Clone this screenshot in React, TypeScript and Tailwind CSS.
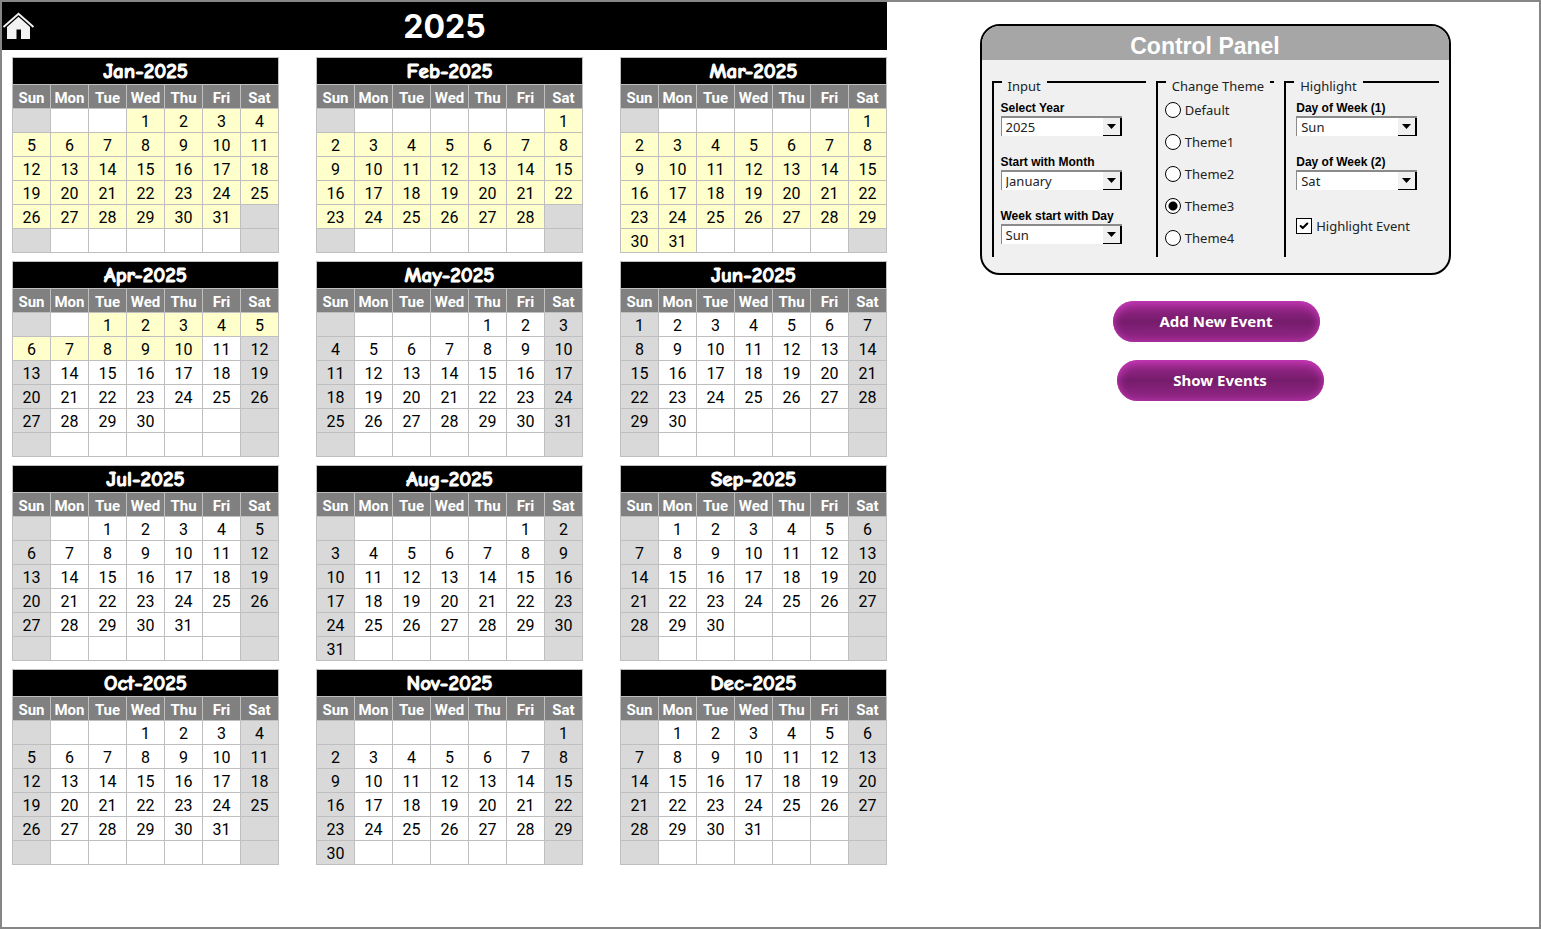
import { useState } from 'react'
import type { ReactNode } from 'react'
import { Check } from 'lucide-react'
import clsx from 'clsx'

const MONTHS = ['January', 'February', 'March', 'April', 'May', 'June', 'July', 'August', 'September', 'October', 'November', 'December']
const DAYS = ['Sun', 'Mon', 'Tue', 'Wed', 'Thu', 'Fri', 'Sat']
const YEARS = ['2023', '2024', '2025', '2026', '2027']
const THEMES = ['Default', 'Theme1', 'Theme2', 'Theme3', 'Theme4']

// Event runs from Jan 1 to Apr 10
const EVENT_START = new Date(2025, 0, 1)
const EVENT_END = new Date(2025, 3, 10)

function HomeIcon() {
  return (
    <svg width="33" height="28" viewBox="0 0 33 28" aria-hidden="true">
      <path d="M1.5 15 L16.500 1.800 L31.500 15" fill="none" stroke="#f2f2f2" strokeWidth="2" />
      <path d="M16.500 4.800 L28 15 V27 H19 V17.500 H14.500 V27 H5 V15 Z" fill="#f2f2f2" />
    </svg>
  )
}

type MonthProps = {
  year: number
  month: number
  weekStart: number
  marked: string[]
  showEvent: boolean
}

function Month({ year, month, weekStart, marked, showEvent }: MonthProps) {
  const offset = (new Date(year, month, 1).getDay() - weekStart + 7) % 7
  const count = new Date(year, month + 1, 0).getDate()
  const days = DAYS.map((_, i) => DAYS[(i + weekStart) % 7])

  return (
    <table className="w-[267px] table-fixed border-collapse text-center">
      <thead>
        <tr>
          <th colSpan={7} className="h-[27px] border border-[#bfbfbf] bg-black p-0 font-['Comic_Sans_MS','Comic_Neue','Lato',sans-serif] text-[21px] leading-5 font-bold text-white [-webkit-text-stroke:1px_#fff]">
            {MONTHS[month].slice(0, 3)}-{year}
          </th>
        </tr>
        <tr>
          {days.map((day) => (
            <th key={day} className="h-6 border border-[#bfbfbf] bg-[#808080] p-0 pt-0.5 text-[15px] leading-5 font-bold text-white">
              {day}
            </th>
          ))}
        </tr>
      </thead>
      <tbody>
        {[0, 1, 2, 3, 4, 5].map((week) => (
          <tr key={week}>
            {days.map((day, i) => {
              const n = week * 7 + i - offset + 1
              const inMonth = n >= 1 && n <= count
              const date = new Date(year, month, n)
              const isEvent = showEvent && inMonth && date >= EVENT_START && date <= EVENT_END
              return (
                <td
                  key={day}
                  className={clsx(
                    'h-6 border border-[#bfbfbf] p-0 pt-0.5 text-base leading-5 text-black',
                    isEvent ? 'bg-[#ffffcc]' : marked.includes(day) ? 'bg-[#d9d9d9]' : 'bg-white'
                  )}
                >
                  {inMonth ? n : ''}
                </td>
              )
            })}
          </tr>
        ))}
      </tbody>
    </table>
  )
}

type SelectProps = {
  id: string
  label: string
  value: string
  options: string[]
  onChange: (value: string) => void
}

function SelectField({ id, label, value, options, onChange }: SelectProps) {
  return (
    <div>
      <label htmlFor={id} className="block font-['Liberation_Sans',Arial,sans-serif] text-xs leading-4 font-bold text-black">
        {label}
      </label>
      <div className="relative w-[121px]">
        <select
          id={id}
          value={value}
          onChange={(e) => onChange(e.target.value)}
          className="block h-5 w-full appearance-none border-t-2 border-l border-[#8a8a8a] bg-white pl-1 text-[13px] leading-4 text-[#222]"
        >
          {options.map((option) => (
            <option key={option}>{option}</option>
          ))}
        </select>
        <span className="pointer-events-none absolute top-0.5 right-0 flex h-[18px] w-[19px] items-center justify-center border-r-2 border-b border-black bg-[#f0f0f0]">
          <svg width="9" height="5" viewBox="0 0 9 5" aria-hidden="true">
            <path d="M0 0 H9 L4.500 5 Z" fill="#000" />
          </svg>
        </span>
      </div>
    </div>
  )
}

function Group({ title, className, children }: { title: string; className: string; children: ReactNode }) {
  return (
    <fieldset className={clsx('h-[187px] min-w-0 border-t-2 border-l-2 border-black', className)}>
      <legend className="ml-2 px-1.5 pt-2 text-[13px] leading-4">{title}</legend>
      {children}
    </fieldset>
  )
}

export default function App() {
  const [year, setYear] = useState('2025')
  const [startMonth, setStartMonth] = useState('January')
  const [weekStart, setWeekStart] = useState('Sun')
  const [theme, setTheme] = useState('Theme3')
  const [day1, setDay1] = useState('Sun')
  const [day2, setDay2] = useState('Sat')
  const [showEvent, setShowEvent] = useState(true)

  const first = MONTHS.indexOf(startMonth)
  const buttonClass =
    "h-[41px] w-[207px] rounded-full bg-linear-to-b from-[#a02a92] via-[#761c6c] to-[#96288a] font-['Noto_Sans',sans-serif] text-[15px] font-bold text-white shadow-[inset_0_2px_10px_#d03cc0]"

  return (
    <div className="flex min-h-screen items-start border-2 border-[#868686] bg-white font-['Roboto',sans-serif]">
      <main className="shrink-0">
        <header className="grid h-12 grid-cols-[1fr_auto_1fr] items-center bg-black text-white">
          <a href="#home" aria-label="Home">
            <HomeIcon />
          </a>
          <h1 className="pt-0.5 font-['Inter',sans-serif] text-[32px] leading-10 font-bold">{year}</h1>
        </header>

        <div className="grid grid-cols-3 gap-x-[37px] gap-y-2 pt-[7px] pl-2.5">
          {MONTHS.map((name, i) => (
            <Month
              key={name}
              year={Number(year) + Math.floor((first + i) / 12)}
              month={(first + i) % 12}
              weekStart={DAYS.indexOf(weekStart)}
              marked={[day1, day2]}
              showEvent={showEvent}
            />
          ))}
        </div>
      </main>

      <aside className="flex flex-1 flex-col items-center pt-[22px] pl-1">
        {/* Control panel */}
        <section className="w-[471px] overflow-hidden rounded-[20px] border-2 border-black bg-[#f0f0f0] font-['Noto_Sans',sans-serif] text-[#222]">
          <h2 className="bg-[#a6a6a6] pt-1.5 pr-5 font-['Liberation_Sans',Arial,sans-serif] text-[23px] leading-7 font-bold text-center text-white">
            Control Panel
          </h2>
          <div className="flex gap-2.5 px-2.5 pt-2.5 pb-4">
            <Group title="Input" className="w-[155px]">
              <div className="flex flex-col gap-[18px] pl-[7px] pt-1.5">
                <SelectField id="year" label="Select Year" value={year} options={YEARS} onChange={setYear} />
                <SelectField id="month" label="Start with Month" value={startMonth} options={MONTHS} onChange={setStartMonth} />
                <SelectField id="week-start" label="Week start with Day" value={weekStart} options={DAYS} onChange={setWeekStart} />
              </div>
            </Group>

            <Group title="Change Theme" className="w-[119px]">
              <div className="flex flex-col gap-4 pl-[7px] pt-2">
                {THEMES.map((name) => (
                  <label key={name} className="flex h-4 items-center gap-1 text-[13px] leading-4">
                    <input
                      type="radio"
                      name="theme"
                      checked={theme === name}
                      onChange={() => setTheme(name)}
                      className="size-4 appearance-none rounded-full border border-black bg-white checked:bg-[radial-gradient(circle,#000_4px,#fff_5px)]"
                    />
                    {name}
                  </label>
                ))}
              </div>
            </Group>

            <Group title="Highlight" className="w-[155px]">
              <div className="flex flex-col gap-[18px] pl-2.5 pt-1.5">
                <SelectField id="day-1" label="Day of Week (1)" value={day1} options={DAYS} onChange={setDay1} />
                <SelectField id="day-2" label="Day of Week (2)" value={day2} options={DAYS} onChange={setDay2} />
                <label className="flex items-center gap-1 pt-2.5 text-[13px] leading-4">
                  <span className="relative size-4">
                    <input
                      type="checkbox"
                      checked={showEvent}
                      onChange={(e) => setShowEvent(e.target.checked)}
                      className="peer block size-4 appearance-none border border-black bg-white"
                    />
                    <Check size={10} strokeWidth={5} className="pointer-events-none absolute top-[3px] left-[3px] hidden text-black peer-checked:block" />
                  </span>
                  Highlight Event
                </label>
              </div>
            </Group>
          </div>
        </section>

        <div className="pt-[26px] pl-1.5">
          <div className="flex w-[211px] flex-col gap-[18px]">
            <button type="button" className={clsx(buttonClass, 'self-start')}>Add New Event</button>
            <button type="button" className={clsx(buttonClass, 'self-end')}>Show Events</button>
          </div>
        </div>
      </aside>
    </div>
  )
}
